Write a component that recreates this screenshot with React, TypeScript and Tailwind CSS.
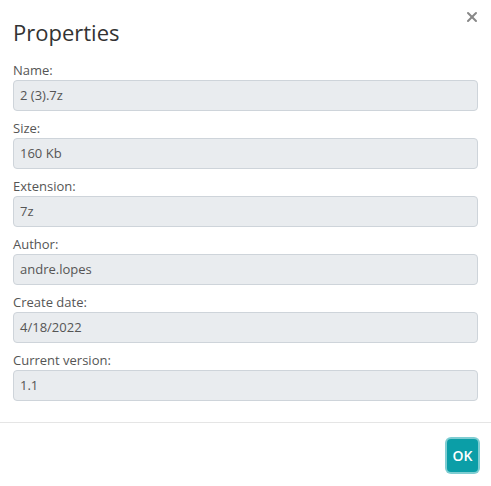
import { X } from 'lucide-react';

const fields = [
  { label: 'Name:', value: '2 (3).7z' },
  { label: 'Size:', value: '160 Kb' },
  { label: 'Extension:', value: '7z' },
  { label: 'Author:', value: 'andre.lopes' },
  { label: 'Create date:', value: '4/18/2022' },
  { label: 'Current version:', value: '1.1' },
];

export default function App() {
  return (
    <div
      className="w-[491px] h-[486px] bg-white flex flex-col"
      style={{ fontFamily: '"Open Sans", "Noto Sans", sans-serif' }}
    >
      <div className="relative px-[13px] pt-[18px]">
        <h4 className="text-[22px] leading-[28px] text-[#333] font-normal">Properties</h4>
        <button className="absolute right-[11px] top-[9px] text-[#888]">
          <X className="w-[16px] h-[16px]" strokeWidth={3} />
        </button>
      </div>

      <div className="px-[13px] pt-[14px] pb-[21px] flex flex-col">
        {fields.map((f, i) => (
          <div key={f.label} className={i < fields.length - 1 ? 'mb-[7px]' : ''}>
            <label className="block text-[13px] leading-[20px] text-[#555]">{f.label}</label>
            <div className="h-[31px] px-[6px] flex items-center bg-[#e9ecef] border border-[#ced4da] rounded-[4px] text-[13px] text-[#555]">
              {f.value}
            </div>
          </div>
        ))}
      </div>

      <div className="border-t border-[#e5e5e5] flex justify-end px-[11px] pt-[14px]">
        <div className="p-[2px] rounded-[6px] bg-[#7fcdd2]">
          <button className="w-[31px] h-[33px] rounded-[4px] bg-[#0b9ea7] text-white text-[14px] font-semibold flex items-center justify-center">
            OK
          </button>
        </div>
      </div>
    </div>
  );
}
